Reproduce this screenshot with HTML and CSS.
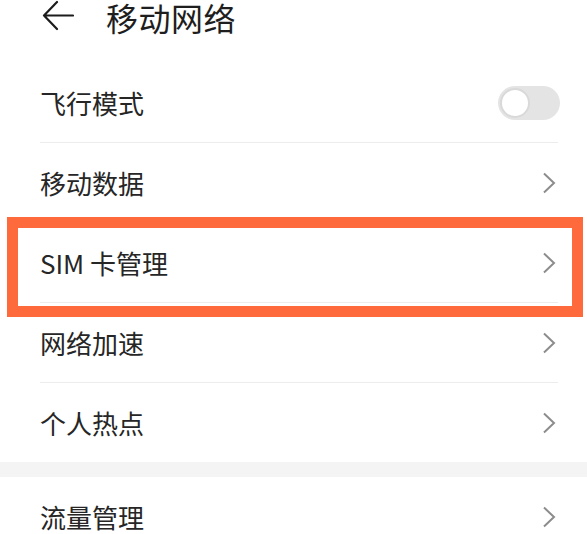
FILE: index.html
```html
<!DOCTYPE html>
<html lang="zh-CN">
<head>
<meta charset="utf-8">
<title>移动网络</title>
<link rel="stylesheet" href="styles.css">
</head>
<body>
<div class="page">
  <header class="header">
    <svg class="back" width="32" height="34" viewBox="0 0 32 34">
      <path d="M15 2 L2 15.5 L15 29 M2 15.5 H31" fill="none" stroke="#1c1c1c" stroke-width="2.2" stroke-linecap="round" stroke-linejoin="round"/>
    </svg>
    <h1 class="title">移动网络</h1>
  </header>
  <ul class="list">
    <li class="row">
      <span class="label">飞行模式</span>
      <span class="switch"><span class="knob"></span></span>
    </li>
    <li class="row">
      <span class="label">移动数据</span>
      <svg class="chev" width="14" height="22" viewBox="0 0 14 22"><path d="M2 1.5 L12 11 L2 20.5" fill="none" stroke="#8c8c8c" stroke-width="2"/></svg>
    </li>
    <li class="row">
      <span class="label">SIM 卡管理</span>
      <svg class="chev" width="14" height="22" viewBox="0 0 14 22"><path d="M2 1.5 L12 11 L2 20.5" fill="none" stroke="#8c8c8c" stroke-width="2"/></svg>
    </li>
    <li class="row">
      <span class="label">网络加速</span>
      <svg class="chev" width="14" height="22" viewBox="0 0 14 22"><path d="M2 1.5 L12 11 L2 20.5" fill="none" stroke="#8c8c8c" stroke-width="2"/></svg>
    </li>
    <li class="row last">
      <span class="label">个人热点</span>
      <svg class="chev" width="14" height="22" viewBox="0 0 14 22"><path d="M2 1.5 L12 11 L2 20.5" fill="none" stroke="#8c8c8c" stroke-width="2"/></svg>
    </li>
  </ul>
  <div class="band"></div>
  <ul class="list">
    <li class="row last">
      <span class="label">流量管理</span>
      <svg class="chev" width="14" height="22" viewBox="0 0 14 22"><path d="M2 1.5 L12 11 L2 20.5" fill="none" stroke="#8c8c8c" stroke-width="2"/></svg>
    </li>
  </ul>
  <div class="highlight"></div>
</div>
</body>
</html>
```
FILE: styles.css
```css
html, body {
  margin: 0;
  padding: 0;
  background: #ffffff;
}
body {
  font-family: "Noto Sans CJK SC", "Noto Sans", sans-serif;
  color: #262626;
}
.page {
  position: relative;
  width: 587px;
  height: 534px;
  overflow: hidden;
}
.header {
  display: flex;
  align-items: flex-start;
  height: 63px;
  padding-left: 42px;
}
.back {
  display: block;
}
.title {
  margin: 0 0 0 32px;
  font-size: 32px;
  font-weight: 400;
  line-height: 34px;
  color: #1e1e1e;
  letter-spacing: 0.5px;
}
.list {
  list-style: none;
  margin: 0;
  padding: 0;
}
.row {
  display: flex;
  align-items: center;
  justify-content: space-between;
  height: 79px;
  margin: 0 29px 0 40px;
  border-bottom: 1.5px solid #ececec;
}
.row.last {
  border-bottom: none;
}
.label {
  font-size: 26px;
  line-height: 30px;
  color: #262626;
}
.chev {
  display: block;
  margin-right: 2px;
}
.switch {
  position: relative;
  display: block;
  width: 62px;
  height: 34px;
  border-radius: 17px;
  background: #e4e4e4;
  margin-right: -2px;
}
.knob {
  position: absolute;
  left: 2px;
  top: 2px;
  width: 26px;
  height: 26px;
  border-radius: 50%;
  background: #ffffff;
  border: 2px solid #d9d9d9;
}
.band {
  height: 15px;
  background: #f4f4f4;
}
.highlight {
  position: absolute;
  left: 7px;
  top: 217px;
  width: 554px;
  height: 78px;
  border: 11px solid #ff6a3c;
}
```
